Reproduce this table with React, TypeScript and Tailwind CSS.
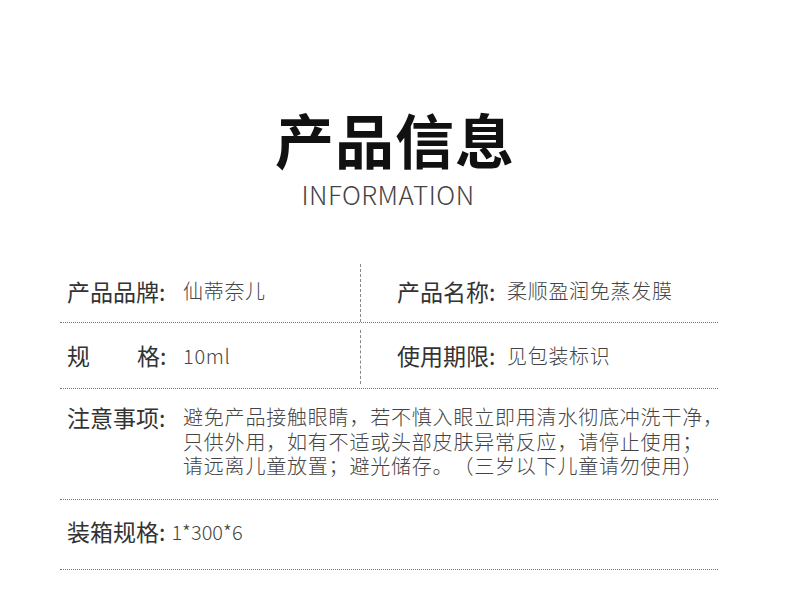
import React from "react"

const font = { fontFamily: '"Noto Sans CJK SC", "Noto Sans", sans-serif' }

const Label = ({ children, width }: { children: React.ReactNode; width: string }) => (
  <span className={`shrink-0 text-[23px] text-[#333] ${width}`}>{children}</span>
)

const Value = ({ children }: { children: React.ReactNode }) => (
  <span className="text-[20px] font-light text-[#444] tracking-[0.7px]">{children}</span>
)

const App = () => {
  return (
    <div style={font} className="w-[790px] h-[597px] bg-white overflow-hidden [text-spacing-trim:space-all]">
      <div className="pt-[102px] flex flex-col items-center">
        <h1 className="text-[59px] leading-[74px] font-bold text-[#111] tracking-[1px]">产品信息</h1>
        <p className="text-[26px] leading-[34px] font-light text-[#444] tracking-[0.5px] pr-[14px] mt-[1px]">INFORMATION</p>
      </div>

      <div className="ml-[60px] w-[658px] mt-[53px]">
        <div className="grid grid-cols-[301px_1fr] border-b border-dotted border-[#777]">
          <div className="flex items-center h-[58px] pl-[7px] pb-[4px] border-r border-dashed border-[#888]">
            <Label width="w-[116px]">产品品牌:</Label>
            <Value>仙蒂奈儿</Value>
          </div>
          <div className="flex items-center h-[58px] pl-[36px] pb-[4px]">
            <Label width="w-[110px]">产品名称:</Label>
            <Value>柔顺盈润免蒸发膜</Value>
          </div>
        </div>

        <div className="grid grid-cols-[301px_1fr] border-b border-dotted border-[#777]">
          <div className="pt-[7px] pb-[4px]">
            <div className="flex items-center h-[54px] pl-[7px] pb-[3px] border-r border-dashed border-[#888]">
              <span className="w-[116px] shrink-0 flex text-[23px] text-[#333]">
                <span className="w-[93px] flex justify-between">
                  <span>规</span>
                  <span>格</span>
                </span>
                <span>:</span>
              </span>
              <Value>10ml</Value>
            </div>
          </div>
          <div className="flex items-center pl-[36px]">
            <Label width="w-[110px]">使用期限:</Label>
            <Value>见包装标识</Value>
          </div>
        </div>

        <div className="flex pl-[7px] pt-[14px] h-[111px] border-b border-dotted border-[#777]">
          <span className="w-[116px] shrink-0 text-[23px] leading-[28px] text-[#333]">注意事项:</span>
          <p className="text-[20px] leading-[24.5px] font-light text-[#444] tracking-[0.8px] pt-[2px] whitespace-nowrap">
            避免产品接触眼睛，若不慎入眼立即用清水彻底冲洗干净，
            <br />
            只供外用，如有不适或头部皮肤异常反应，请停止使用；
            <br />
            请远离儿童放置；避光储存。（三岁以下儿童请勿使用）
          </p>
        </div>

        <div className="flex items-center pl-[7px] pb-[6px] h-[70px] border-b border-dotted border-[#777]">
          <span className="text-[23px] text-[#333]">装箱规格:</span>
          <span className="ml-[6px] text-[20px] font-light text-[#444]">1*300*6</span>
        </div>
      </div>
    </div>
  )
}

export default App
